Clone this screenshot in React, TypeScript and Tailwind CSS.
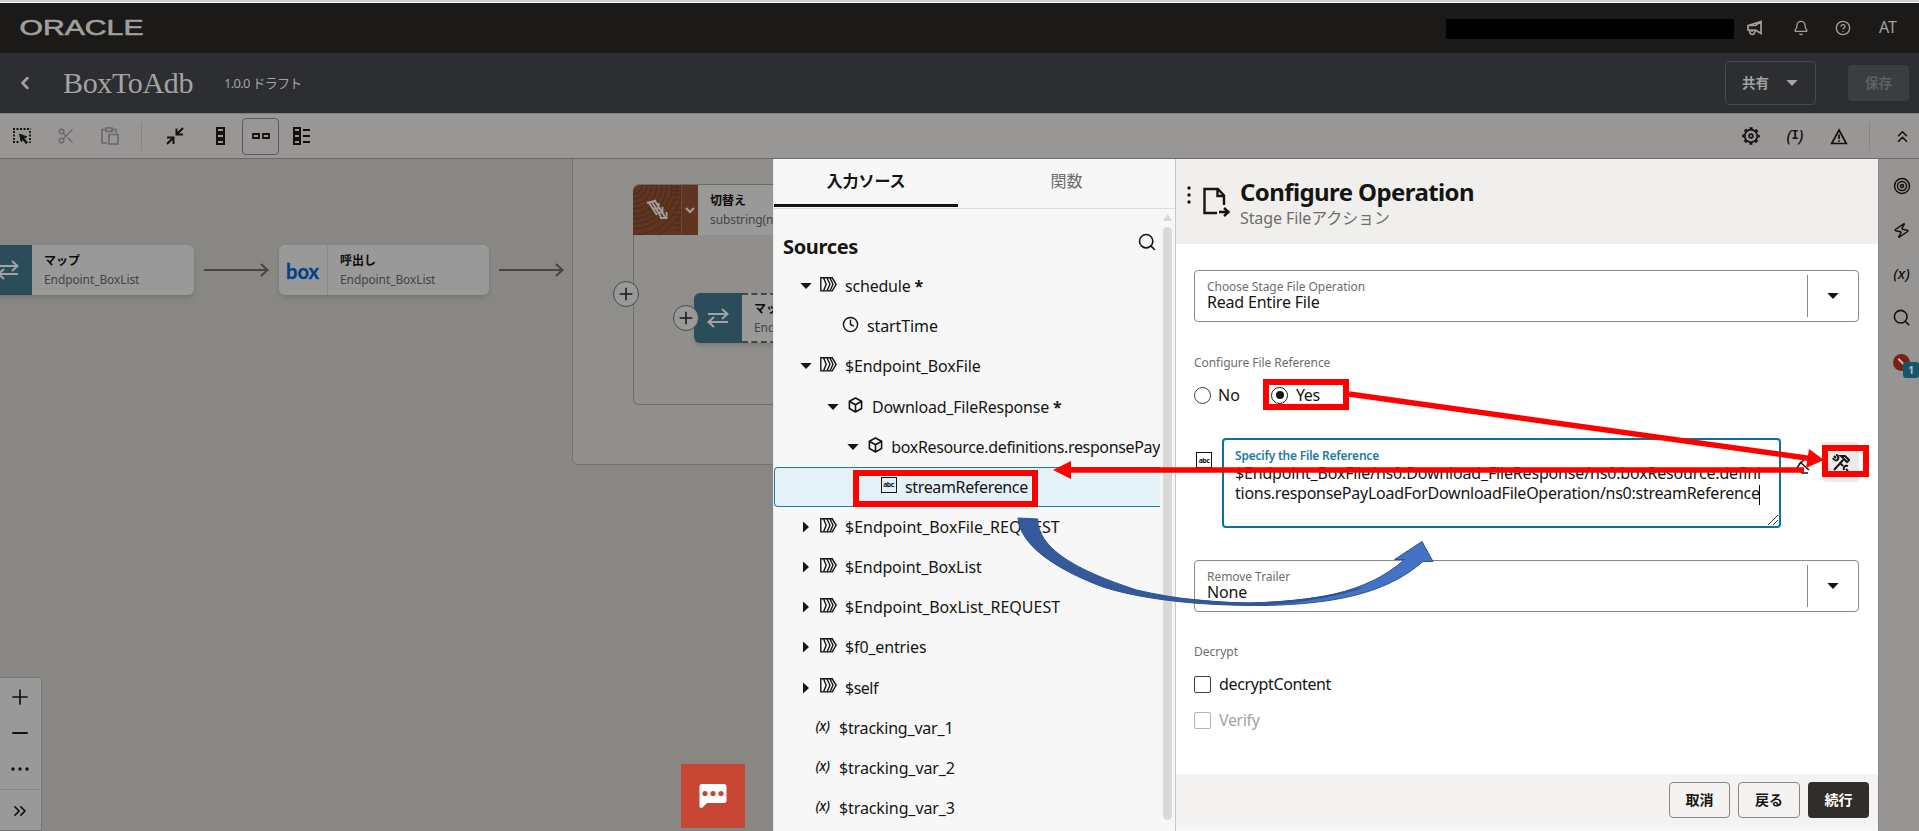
import React from "react";
import { Bell, ChevronLeft, ChevronsRight, ChevronsUp, CircleHelp, Clock, Minus, Plus, Scissors, Search, Target, Zap } from "lucide-react";

const sans = "'Noto Sans', 'Noto Sans CJK JP', sans-serif";

type NodeKind = "flow" | "time" | "cube" | "abc" | "var";

interface SourceRow {
  label: string;
  kind: NodeKind;
  pad: string;
  tracking: string;
  open?: boolean;
  leaf?: boolean;
  required?: boolean;
  selected?: boolean;
}

const rows: SourceRow[] = [
  { label: "schedule", kind: "flow", pad: "pl-[26px]", tracking: "tracking-[-0.2px]", open: true, required: true },
  { label: "startTime", kind: "time", pad: "pl-[68px]", tracking: "tracking-[-0.1px]", leaf: true },
  { label: "$Endpoint_BoxFile", kind: "flow", pad: "pl-[26px]", tracking: "tracking-[-0.14px]", open: true },
  { label: "Download_FileResponse", kind: "cube", pad: "pl-[53px]", tracking: "tracking-[-0.22px]", open: true, required: true },
  { label: "boxResource.definitions.responsePay", kind: "cube", pad: "pl-[73px]", tracking: "tracking-[-0.35px]", open: true },
  { label: "streamReference", kind: "abc", pad: "pl-[105px]", tracking: "tracking-[-0.35px]", leaf: true, selected: true },
  { label: "$Endpoint_BoxFile_REQUEST", kind: "flow", pad: "pl-[26px]", tracking: "tracking-normal" },
  { label: "$Endpoint_BoxList", kind: "flow", pad: "pl-[26px]", tracking: "tracking-[-0.1px]" },
  { label: "$Endpoint_BoxList_REQUEST", kind: "flow", pad: "pl-[26px]", tracking: "tracking-normal" },
  { label: "$f0_entries", kind: "flow", pad: "pl-[26px]", tracking: "tracking-[-0.14px]" },
  { label: "$self", kind: "flow", pad: "pl-[26px]", tracking: "tracking-[-0.5px]" },
  { label: "$tracking_var_1", kind: "var", pad: "pl-[40px]", tracking: "tracking-[-0.2px]", leaf: true },
  { label: "$tracking_var_2", kind: "var", pad: "pl-[40px]", tracking: "tracking-[-0.1px]", leaf: true },
  { label: "$tracking_var_3", kind: "var", pad: "pl-[40px]", tracking: "tracking-[-0.1px]", leaf: true },
];

const KindIcon: React.FC<{ kind: NodeKind }> = ({ kind }) => {
  if (kind === "time") return <Clock size={17} strokeWidth={2} />;
  if (kind === "var") return <span className="w-4 text-center text-[14px] font-medium italic leading-4 tracking-[-0.5px]">(x)</span>;
  if (kind === "abc") return <AbcIcon />;
  if (kind === "cube")
    return (
      <svg width="15" height="16" viewBox="0 0 15 16" fill="none" stroke="currentColor" strokeWidth="1.6" strokeLinejoin="round">
        <path d="M7.5 1 13.6 4.3v7.2L7.5 15 1.4 11.5V4.3zM1.4 4.3l6.1 3.4 6.1-3.4M7.5 7.7V15" />
      </svg>
    );
  return (
    <svg width="17" height="15" viewBox="0 0 17 15" fill="none" stroke="currentColor" strokeWidth="1.4">
      <path d="M.8.8h11.4l3.900 6.500-3.900 6.600H.8zM3.600 1l2.600 6.300-2.600 6.500M7 1l3 6.300L7 13.800M10 1l3 6.300-3 6.500" />
    </svg>
  );
};

const AbcIcon = () => (
  <span className="flex h-4 w-4 shrink-0 items-center justify-center border-[1.5px] border-[#161513] text-[7px] font-bold leading-none tracking-[-0.5px]">abc</span>
);

const Caret: React.FC<{ open?: boolean }> = ({ open }) => (
  <svg width="12" height="12" viewBox="0 0 12 12" fill="currentColor">
    <path d={open ? "M.3 3h11.400L6 9z" : "M3 .4v11.200L9 6z"} />
  </svg>
);

const SwapIcon = () => (
  <svg width="22" height="20" viewBox="0 0 22 20" fill="none" stroke="#a3a3a3" strokeWidth="2">
    <path d="M1 6h19M15 1l5.500 5L15 11M21 14H2M7 9l-5.500 5L7 19" />
  </svg>
);

const FlowArrow = () => (
  <svg width="65" height="14" viewBox="0 0 65 14" fill="none" stroke="#474542" strokeWidth="2">
    <path d="M0 7h63M57 1l6.500 6-6.500 6" />
  </svg>
);

const AddDot: React.FC<{ className: string }> = ({ className }) => (
  <span className={`absolute flex h-[26px] w-[26px] items-center justify-center rounded-full border border-[#4c4a47] bg-[#999] text-[#1b1a18] ${className}`}>
    <Plus size={20} strokeWidth={1.8} />
  </span>
);

const TopBar = () => (
  <header className="flex h-[50px] items-center bg-[#1b1a18] pl-5 pr-5 text-[#a3a19e]">
    <svg width="125" height="20" viewBox="0 0 125 20" className="-mt-0.5 overflow-visible">
      <text x="-.5" y="18" textLength="124" lengthAdjust="spacingAndGlyphs" fill="#a19f9c" stroke="#a19f9c" strokeWidth=".6" fontFamily="'Liberation Sans', sans-serif" fontSize="21.500">ORACLE</text>
    </svg>
    <div className="ml-auto mt-0.5 h-5 w-[288px] bg-black" />
    <div className="ml-[13px] flex items-center">
      <svg width="16" height="16" viewBox="0 0 16 16" fill="none" stroke="currentColor" strokeWidth="1.700">
        <path d="M14 1.500v12L8.500 10H1V5.500h7.500zM14 1.500 1 5.500M2.500 10c0 3 1 4.500 3 4.500S8 13 8 10M5 10v2" />
      </svg>
      <Bell size={16} className="ml-[30px]" />
      <CircleHelp size={16} className="ml-[26px]" />
      <span className="mb-[3px] ml-[28px] w-5 text-[16px] leading-5">AT</span>
    </div>
  </header>
);

const TitleBar = () => (
  <div className="flex h-[60px] items-center bg-[#2d2e32] text-[#a3a3a3]">
    <ChevronLeft size={20} strokeWidth={3} className="ml-[15px]" />
    <h1 className="ml-7 w-[130px] whitespace-nowrap text-[30px] leading-10 tracking-[-0.36px]" style={{ fontFamily: "'Liberation Serif', serif" }}>BoxToAdb</h1>
    <span className="ml-[31px] mt-px text-[13px] tracking-[-0.7px]">1.0.0 ドラフト</span>
    <button className="ml-auto flex h-11 w-[91px] items-center rounded border border-[#47494d] pl-[16px] text-[13.500px] font-bold">
      共有
      <span className="ml-[17px]"><Caret open /></span>
    </button>
    <button className="ml-8 mr-2.5 h-9 w-[61px] rounded bg-[#3a3e40] text-[13.500px] font-bold text-[#5d6062]">保存</button>
  </div>
);

const EditorToolbar = () => (
  <div className="flex h-[46px] items-center border-b border-t border-b-[#6d6b6b] border-t-[#807e7e] bg-[#999696] text-[#12110f]">
    <svg className="ml-[13px]" width="19" height="17" viewBox="0 0 19 17" fill="none" stroke="currentColor" strokeWidth="1.800">
      <path d="M0 1h18M1 3v12M17 3v12M0 14h6" strokeDasharray="2 1.500" />
      <path d="M6.500 6l7.500 2.800-3 1.400 3.600 4.200-1.500 1.300-3.500-4.200-1.400 2.500z" fill="currentColor" strokeWidth=".8" />
    </svg>
    <Scissors size={18} className="ml-[25px] text-[#6b6969]" />
    <svg className="ml-[26px] text-[#6b6969]" width="18" height="18" viewBox="0 0 18 18" fill="none" stroke="currentColor" strokeWidth="1.700">
      <path d="M5 2.500H1v13.500h5M11 2.500h4V6M5 1h6v3.500H5zM8 7.500h9V17H8z" />
    </svg>
    <div className="ml-[22px] h-[29px] w-px bg-[#868484]" />
    <svg className="ml-[24px]" width="18" height="18" viewBox="0 0 18 18" fill="none" stroke="currentColor" strokeWidth="2">
      <path d="M17 1l-6 6M10.500 1.500V7.500H17M1 17l6-6M1 10.500h6.500V17" />
    </svg>
    <svg className="ml-[31px]" width="11" height="18" viewBox="0 0 11 18" fill="none" stroke="currentColor" strokeWidth="2">
      <path d="M2 1h7v4H2zM2 7h7v4H2zM2 13h7v4H2z" />
    </svg>
    <span className="ml-[16px] flex h-[37px] w-[37px] items-center justify-center rounded border border-[#5c5a5a]">
      <svg width="18" height="6" viewBox="0 0 18 6" fill="none" stroke="currentColor" strokeWidth="1.800">
        <path d="M1 1h6v4H1zM11 1h6v4h-6z" />
      </svg>
    </span>
    <svg className="ml-[13px]" width="19" height="18" viewBox="0 0 19 18" fill="none" stroke="currentColor" strokeWidth="2">
      <path d="M2 1h6v4H2zM2 7h6v4H2zM2 13h6v4H2zM11 3h7M11 9h7M11 15h7" />
    </svg>
    <svg className="ml-auto" width="18" height="18" viewBox="0 0 18 18" fill="none" stroke="currentColor">
      <circle cx="9" cy="9" r="7.800" strokeWidth="1.900" strokeDasharray="3.060 3.060" strokeDashoffset="1.530" />
      <circle cx="9" cy="9" r="6.300" strokeWidth="1.700" />
      <circle cx="9" cy="9" r="1.900" strokeWidth="1.600" />
    </svg>
    <span className="ml-[25px] flex w-[20px] items-center justify-center text-[16px] leading-none">
      <i className="font-medium">(</i>
      <b className="text-[12px]" style={{ fontFamily: "'Liberation Mono', monospace" }}>I</b>
      <i className="font-medium">)</i>
    </span>
    <svg className="ml-[25px]" width="18" height="17" viewBox="0 0 18 17" fill="none" stroke="currentColor" strokeWidth="1.700">
      <path d="M9 2l7.300 13.500H1.700zM9 6.500v4.500M9 12.300v1.500" />
    </svg>
    <div className="ml-[21px] h-[29px] w-px bg-[#868484]" />
    <ChevronsUp size={19} className="ml-[23px] mr-[7px]" />
  </div>
);

const FlowCanvas = () => (
  <section className="relative h-full w-[773px] overflow-hidden bg-[#898784]">
    <div className="absolute -left-4 top-[86px] flex h-[50px] w-[210px] overflow-hidden rounded-md bg-[#999] shadow-md">
      <div className="flex w-12 items-center justify-end bg-[#2b4c5a] pr-[13px]"><SwapIcon /></div>
      <NodeText title="マップ" sub="Endpoint_BoxList" />
    </div>
    <div className="absolute left-[204px] top-[104px]"><FlowArrow /></div>
    <div className="absolute left-[279px] top-[86px] flex h-[50px] w-[210px] overflow-hidden rounded-md bg-[#999] shadow-md">
      <div className="flex w-[49px] items-center justify-center border-r border-[#8b8b8b]">
        <svg width="34" height="20" viewBox="0 0 34 20">
          <text x="0" y="18.500" textLength="33" lengthAdjust="spacingAndGlyphs" fill="#043f88" stroke="#043f88" strokeWidth=".3" fontFamily="Lato, sans-serif" fontSize="21.500" fontWeight="700">box</text>
        </svg>
      </div>
      <NodeText title="呼出し" sub="Endpoint_BoxList" />
    </div>
    <div className="absolute left-[499px] top-[104px]"><FlowArrow /></div>

    <div className="absolute -top-2 left-[572px] h-[314px] w-[240px] rounded-md border border-[#747270] bg-[#918f8c]" />
    <div className="absolute left-[633px] top-[25px] h-[221px] w-[180px] rounded-md border border-[#6d6b69]" />
    <div className="absolute left-[633px] top-[26px] flex h-[50px] w-[180px] overflow-hidden rounded-tl-md bg-[#999]">
      <div className="w-12 bg-[#5f3420]">
        <svg width="48" height="50" viewBox="0 0 48 50" fill="none">
          <g stroke="#4a2a1b" strokeWidth="1">
            <circle cx="0" cy="0" r="9" /><circle cx="0" cy="0" r="14" /><circle cx="0" cy="0" r="19" />
            <circle cx="0" cy="0" r="24" /><circle cx="0" cy="0" r="29" /><circle cx="0" cy="0" r="34" />
            <circle cx="0" cy="0" r="39" /><circle cx="0" cy="0" r="44" /><circle cx="0" cy="0" r="50" />
            <circle cx="0" cy="0" r="56" /><path d="M38 2h10M38 6h10M38 10h10M39 15h9M40 20h8M41 25h7M41 30h7M41 35h7M41 40h7M41 45h7" />
          </g>
          <g stroke="#a39c98" strokeWidth="1.900">
            <path d="M14 18l9-2.500M16 18l8 12M19 17l9 15M22 16l10 16" />
            <path d="M20.500 23.500h5V18M24.500 27.500h5V22M27 33h6.500v-6" />
          </g>
        </svg>
      </div>
      <div className="flex w-[17px] items-center justify-center border-l border-[#70462f] bg-[#5f3420]">
        <svg width="10" height="7" viewBox="0 0 10 7" fill="none" stroke="#a39c98" strokeWidth="2"><path d="M1 1l4 4 4-4" /></svg>
      </div>
      <NodeText title="切替え" sub="substring(na" />
    </div>
    <AddDot className="left-[613px] top-[122px]" />
    <div className="absolute left-[694px] top-[134px] flex h-[50px] w-[120px] overflow-hidden rounded-l-md bg-[#999] shadow-md">
      <div className="flex w-12 items-center justify-center bg-[#2b4c5a]"><SwapIcon /></div>
      <div className="flex-1 border-y-2 border-dashed border-[#474542]">
        <div className="-mt-0.5"><NodeText title="マップ" sub="Endpoint" /></div>
      </div>
    </div>
    <AddDot className="left-[673px] top-[146px]" />

    <div className="absolute bottom-0 left-0 flex h-[154px] w-[42px] flex-col items-center border border-l-0 border-[#777] bg-[#999] pr-px text-[#12110f]">
      <Plus size={24} strokeWidth={1.7} className="mt-[7px]" />
      <Minus size={24} strokeWidth={2} className="mt-[12px]" />
      <svg className="mt-[22px]" width="18" height="4" fill="currentColor"><circle cx="2" cy="2" r="1.700" /><circle cx="9" cy="2" r="1.700" /><circle cx="16" cy="2" r="1.700" /></svg>
      <div className="mt-[18px] h-px w-[38px] bg-[#868484]" />
      <ChevronsRight size={20} className="mt-[11px]" />
    </div>

    <div className="absolute bottom-[3px] left-[681px] flex h-16 w-16 items-center justify-center bg-[#c74634]">
      <svg width="28" height="26" viewBox="0 0 28 26">
        <path d="M3 1h22a2.500 2.500 0 0 1 2.500 2.500v14A2.500 2.500 0 0 1 25 20H8l-4.500 4.500C2 25.500.500 25 .500 23V3.500A2.500 2.500 0 0 1 3 1z" fill="#fff" />
        <g fill="#c74634"><circle cx="6" cy="10.500" r="2.600" /><circle cx="14" cy="10.500" r="2.600" /><circle cx="22" cy="10.500" r="2.600" /></g>
      </svg>
    </div>
  </section>
);

const NodeText: React.FC<{ title: string; sub: string }> = ({ title, sub }) => (
  <div className="whitespace-nowrap pl-[12px] pt-[7px]">
    <div className="text-[12px] font-bold leading-[18px] text-[#0d0c0b]">{title}</div>
    <div className="text-[12px] leading-[20px] tracking-[-0.1px] text-[#454443]">{sub}</div>
  </div>
);

const SourcesPanel = () => (
  <section className="flex h-full w-[403px] flex-col border-l border-r border-l-[#e8e8e8] border-r-[#c9c8c7] bg-[#f7f7f7] text-[#161513]">
    <div className="flex h-[50px] border-b border-[#dedddb] pb-px text-[16px]">
      <button className="w-[184px] border-b-[3px] border-[#161513] pb-0.5 font-bold">入力ソース</button>
      <button className="flex-1 pb-1 text-[#6f6d6b]">関数</button>
    </div>
    <div className="flex min-h-0 flex-1">
      <div className="w-[386px] overflow-hidden">
        <div className="flex h-[57px] items-start justify-between pl-[9px] pr-[3px]">
          <h2 className="pt-[24px] text-[20px] font-bold leading-7 tracking-[-0.35px]">Sources</h2>
          <Search size={20} strokeWidth={1.9} className="mt-[23px]" />
        </div>
        {rows.map((row) => (
          <div
            key={row.label}
            className={`flex h-[40.16px] items-center whitespace-nowrap ${row.pad} ${row.selected ? "rounded-l border border-r-0 border-[#227e9e] bg-[#e4f1f7]" : ""}`}
          >
            {!row.leaf && <span className="mr-[8px] w-[12px]"><Caret open={row.open} /></span>}
            <span className="mb-[4px] flex w-[17px] justify-center"><KindIcon kind={row.kind} /></span>
            <span className={`ml-[8px] text-[16px] ${row.tracking}`}>
              {row.label}
              {row.required && <b> *</b>}
            </span>
          </div>
        ))}
      </div>
      <div className="ml-[3px] flex w-[9px] flex-col items-center pt-[5px]">
        <svg width="9" height="7" viewBox="0 0 9 7" fill="#d9d9d9"><path d="M4.500 0 9 7H0z" /></svg>
        <div className="mb-[11px] mt-[6px] w-full flex-1 rounded-full bg-[#d9d9d9]" />
      </div>
    </div>
  </section>
);

const SelectField: React.FC<{ label: string; value: string }> = ({ label, value }) => (
  <div className="flex h-[52px] items-center rounded border border-[#8a8885] bg-white">
    <div className="flex-1 pb-[2px] pl-[12px]">
      <div className="text-[12px] leading-[15px] tracking-[-0.05px] text-[#6f6d6b]">{label}</div>
      <div className="text-[16px] leading-[17px] tracking-[-0.2px]">{value}</div>
    </div>
    <div className="h-[42px] w-px bg-[#8a8885]" />
    <div className="flex w-[50px] justify-center"><Caret open /></div>
  </div>
);

const ConfigurePanel = () => (
  <section className="flex h-full w-[702px] flex-col bg-white text-[#161513]">
    <div className="flex h-[85px] items-start bg-[#f0efed]">
      <svg className="ml-[11px] mt-[26px]" width="4" height="20" fill="currentColor"><circle cx="2" cy="3" r="1.700" /><circle cx="2" cy="10" r="1.700" /><circle cx="2" cy="17" r="1.700" /></svg>
      <svg className="ml-[12px] mt-[28px]" width="28" height="31" viewBox="0 0 28 31" fill="none" stroke="currentColor" strokeWidth="2.400">
        <path d="M14 26H1.500V2h13.300L21 8.500V18M14.500 2v7H21M16 25h9M21 21l4.500 4-4.500 4" />
      </svg>
      <div className="ml-[9px] pt-[17px]">
        <h2 className="text-[24px] font-bold leading-[31px] tracking-[-0.6px]">Configure Operation</h2>
        <p className="text-[16px] leading-[22px] tracking-[-0.1px] text-[#6f6d6b]">Stage Fileアクション</p>
      </div>
    </div>

    <div className="flex-1 pl-[18px] pr-[19px] pt-[26px]">
      <SelectField label="Choose Stage File Operation" value="Read Entire File" />
      <div className="mt-[31px] text-[12px] leading-5 tracking-[-0.06px] text-[#6f6d6b]">Configure File Reference</div>
      <div className="mt-[12px] flex h-5 items-center text-[16px]">
        <span className="h-[17px] w-[17px] rounded-full border-[1.5px] border-[#403e3c]" />
        <span className="ml-[7px] w-[53px]">No</span>
        <span className="flex h-[17px] w-[17px] items-center justify-center rounded-full border-[1.5px] border-[#161513]"><i className="h-2 w-2 rounded-full bg-[#161513]" /></span>
        <span className="ml-2 tracking-[-0.4px]">Yes</span>
      </div>

      <div className="mt-[33px] flex h-[90px]">
        <div className="w-[28px] pl-0.5 pt-[14px]"><AbcIcon /></div>
        <div className="relative w-[559px] rounded border-2 border-[#0b7399] pl-[11px] pt-[8px]">
          <div className="text-[12px] font-semibold leading-[15px] tracking-[-0.22px] text-[#1f7b9e]">Specify the File Reference</div>
          <div className="whitespace-nowrap text-[16px] leading-5">
            <div className="tracking-[-0.17px]">$Endpoint_BoxFile/ns0:Download_FileResponse/ns0:boxResource.defini</div>
            <div className="tracking-[-0.26px]">
              tions.responsePayLoadForDownloadFileOperation/ns0:streamReference
              <span className="-ml-px inline-block h-5 w-[1.5px] bg-black align-middle" />
            </div>
          </div>
          <svg className="absolute bottom-0 right-0" width="12" height="12" fill="none" stroke="#333"><path d="M1 11 11 1M6 11l5-5" /></svg>
        </div>
        <svg className="ml-[15px] mt-[20px]" width="17" height="18" viewBox="0 0 17 18" fill="none" stroke="currentColor" strokeWidth="1.500">
          <path d="M1 10 5 4M4 4l9 8M3 6l5-4M1 10l5 5h6" />
        </svg>
        <div className="ml-auto mt-[4px] flex h-10 w-9 items-center justify-center rounded bg-[#ecebe9] pt-0.5">
          <svg width="18" height="18" viewBox="0 0 18 18" fill="none" stroke="currentColor" strokeWidth="2">
            <path d="M2 16 12 5M9 2h4l4 4-2 2-4-4zM2 2l2 2M1 4c1 3 4 3 5 1s0-4-2-4M8 9l3 3M16 17l-2-2M12 16c-1-3 1-5 4-4" />
          </svg>
        </div>
      </div>

      <div className="mt-[32px]"><SelectField label="Remove Trailer" value="None" /></div>
      <div className="mt-[30px] text-[12px] leading-5 text-[#6f6d6b]">Decrypt</div>
      <div className="mt-[12px] flex h-5 items-center text-[16px] tracking-[-0.36px]">
        <span className="mr-2 h-[17px] w-[17px] rounded-[2px] border-[1.5px] border-[#403e3c]" />
        decryptContent
      </div>
      <div className="mt-[16px] flex h-5 items-center text-[16px] tracking-[-0.36px] text-[#a5a4a2]">
        <span className="mr-2 h-[17px] w-[17px] rounded-[2px] border-[1.5px] border-[#b5b4b2]" />
        Verify
      </div>
    </div>

    <div className="flex h-[57px] justify-end gap-2 border-b-[6px] border-[#f7f7f7] bg-[#f4f3f1] pr-[9px] pt-2 text-[14px] font-bold">
      <button className="h-9 w-[61px] rounded border border-[#8a8885] pb-0.5">取消</button>
      <button className="h-9 w-[62px] rounded border border-[#8a8885] pb-0.5">戻る</button>
      <button className="h-9 w-[61px] rounded bg-[#312d2a] pb-0.5 text-white">続行</button>
    </div>
  </section>
);

const SideRail = () => (
  <aside className="flex h-full w-[41px] flex-col items-center border-l border-[#8a8888] bg-[#979494] pl-[5px] pt-[18px] text-[#12110f]">
    <Target size={18} />
    <Zap size={17} className="mt-[27px] rotate-12" />
    <span className="mt-[24px] text-[15px] font-medium italic leading-5">(x)</span>
    <Search size={19} strokeWidth={2} className="mt-[25px]" />
    <span className="relative mt-[27px] h-[17px] w-[17px] rounded-full bg-[#7c2013]">
      <i className="absolute left-[4px] top-[7px] h-[2px] w-[9px] rotate-45 bg-[#bbb]" />
      <b className="absolute left-[10px] top-2 h-4 w-4 rounded-[3px] bg-[#14566c] text-center text-[10px] leading-4 text-[#bbb]">1</b>
    </span>
  </aside>
);

// Red boxes and arrows that walk the reader through the steps
const Annotations = () => (
  <svg className="pointer-events-none absolute left-0 top-0" width="1919" height="831" fill="none">
    <path
      d="M1180 600.500C1210 604 1240 605.500 1265 605.500C1330 604 1385 595 1423 561.500H1433L1422 541.500L1394.500 559.500H1404.500C1365 595 1310 601 1251 603C1225 603 1200 600 1180 598.500Z"
      fill="#4472c4"
      stroke="#2f528f"
    />
    <path
      d="M1018 518C1020 545 1055 569 1103 587C1150 602 1215 605.500 1251 605.200C1290 604 1330 598 1361 588C1330 597 1290 602 1251 603C1215 603 1175 599 1136.700 590C1075 570 1038 548 1037.700 519Z"
      fill="#355a9b"
      stroke="#2f528f"
    />
    <g stroke="#f00" strokeWidth="6">
      <rect x="1266" y="382" width="80" height="25" />
      <rect x="1825" y="448" width="41" height="26" />
      <rect x="856" y="473" width="179" height="31" />
      <path d="M1349 394 1810 458.500M1804 470H1068" strokeWidth="5.500" />
    </g>
    <path d="M1809 449l15 11-18 8zM1053 470l18-9v18z" fill="#f00" />
  </svg>
);

const App: React.FC = () => (
  <div className="relative flex h-[831px] w-[1919px] flex-col overflow-hidden bg-white" style={{ fontFamily: sans }}>
    <div className="h-[3px] border-b border-white bg-[#cfcfcf]" />
    <TopBar />
    <TitleBar />
    <EditorToolbar />
    <main className="flex min-h-0 flex-1">
      <FlowCanvas />
      <SourcesPanel />
      <ConfigurePanel />
      <SideRail />
    </main>
    <Annotations />
  </div>
);

export default App;
